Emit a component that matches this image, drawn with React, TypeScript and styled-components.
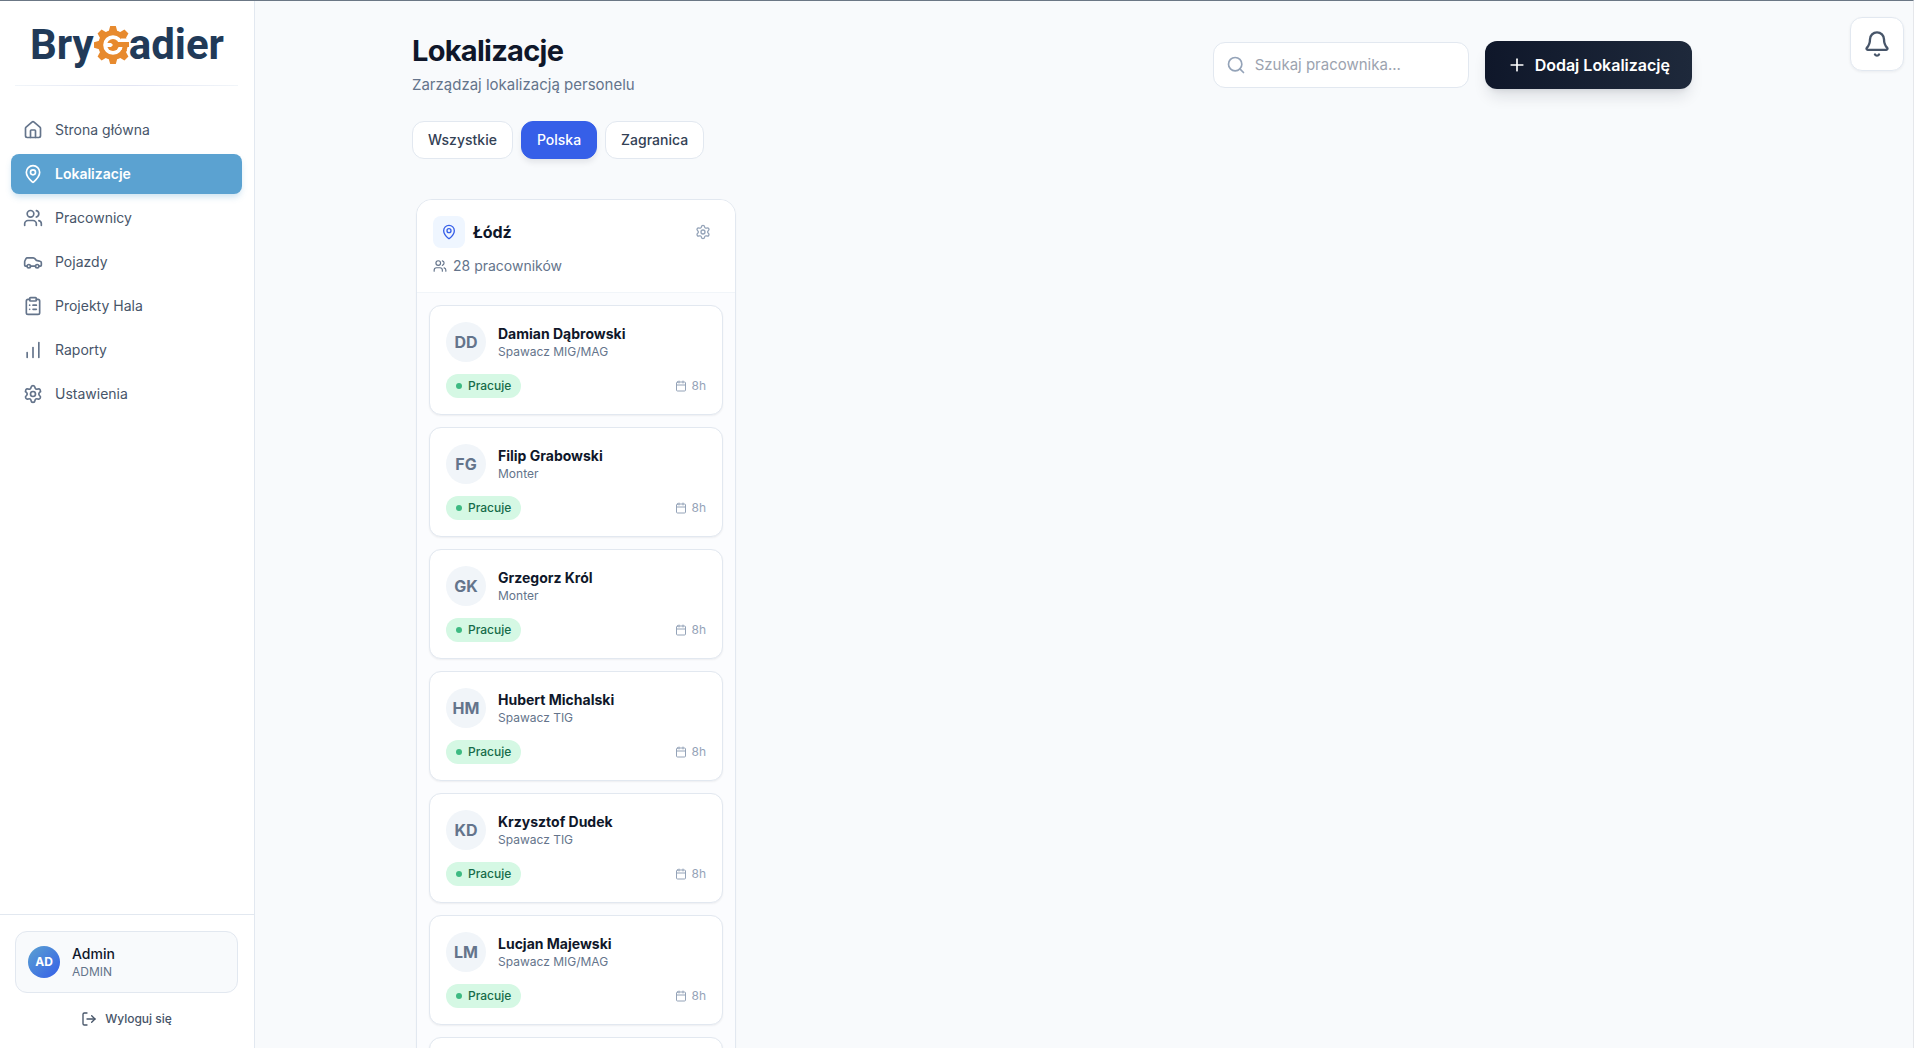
import React from "react";
import styled, { createGlobalStyle } from "styled-components";
import {
  Bell,
  Calendar,
  ChartNoAxesColumnIncreasing,
  ClipboardList,
  House,
  LogOut,
  MapPin,
  Plus,
  Search,
  Settings,
  Users,
} from "lucide-react";

const GlobalStyle = createGlobalStyle`
  *, *::before, *::after { box-sizing: border-box; }
  body {
    margin: 0;
    background: #f8fafc;
    color: #0f172a;
    font-family: Inter, "Noto Sans", sans-serif;
    font-size: 14px;
    line-height: 20px;
    -webkit-font-smoothing: antialiased;
  }
  button, input { font: inherit; color: inherit; }
  button { cursor: pointer; }
  h1, h2, h3, p, ul { margin: 0; padding: 0; }
  ul { list-style: none; }
`;

const Shell = styled.div`
  display: flex;
  height: 100vh;
  overflow: hidden;
  border-top: 1px solid #6b7785;
  border-right: 1px solid #e5e7eb;
`;

const Sidebar = styled.aside`
  flex: none;
  display: flex;
  flex-direction: column;
  width: 255px;
  background: #fff;
  border-right: 1px solid #e2e8f0;
`;

const Brand = styled.a`
  display: flex;
  align-items: center;
  justify-content: center;
  height: 84px;
  padding-top: 4px;
  color: #213a58;
  font-family: Roboto, sans-serif;
  font-size: 42px;
  font-weight: 700;
  line-height: 48px;
  text-decoration: none;
`;

const GearMark = styled.svg`
  flex: none;
  width: 35px;
  height: 38px;
`;

const Divider = styled.div`
  height: 1px;
  margin: 0 16px 0 15px;
  background: linear-gradient(90deg, #f1f5f9, #e2e4f3, #f1f5f9);
`;

const Nav = styled.nav`
  flex: 1;
  padding: 24px 12px 0 11px;
`;

const NavList = styled.ul`
  display: flex;
  flex-direction: column;
  gap: 4px;
`;

const NavLink = styled.a<{ $active?: boolean }>`
  display: flex;
  align-items: center;
  gap: 12px;
  height: 40px;
  padding: 0 12px;
  border-radius: 8px;
  font-weight: ${(p) => (p.$active ? 600 : 400)};
  text-decoration: none;
  color: ${(p) => (p.$active ? "#fff" : "#475569")};
  background: ${(p) => (p.$active ? "#5ba2d1" : "transparent")};
  box-shadow: ${(p) => (p.$active ? "0 4px 6px -1px rgba(91, 162, 209, 0.3)" : "none")};
  svg { color: ${(p) => (p.$active ? "#fff" : "#64748b")}; }
`;

const SidebarFooter = styled.div`
  display: flex;
  flex-direction: column;
  gap: 8px;
  padding: 16px 16px 11px 15px;
  border-top: 1px solid #e2e8f0;
`;

const Account = styled.div`
  display: flex;
  align-items: center;
  gap: 12px;
  height: 62px;
  padding: 0 12px;
  border: 1px solid #e2e8f0;
  border-radius: 12px;
  background: #f8fafc;
`;

const AccountAvatar = styled.span`
  display: grid;
  place-items: center;
  width: 32px;
  height: 32px;
  border-radius: 50%;
  background: linear-gradient(135deg, #5ba2d1, #345ee8);
  color: #fff;
  font-size: 12px;
  font-weight: 700;
`;

const AccountName = styled.p`
  color: #0f172a;
  font-weight: 500;
  line-height: 20px;
`;

const Caption = styled.p`
  color: #64748b;
  font-size: 12px;
  line-height: 16px;
`;

const LogoutButton = styled.button`
  display: flex;
  align-items: center;
  justify-content: center;
  gap: 8px;
  height: 36px;
  border: 0;
  background: transparent;
  color: #475569;
  font-size: 12px;
  font-weight: 500;
`;

const Main = styled.main`
  flex: 1;
  min-width: 0;
  padding: 32px 96px 0 32px;
`;

const Content = styled.div`
  max-width: 1280px;
  margin: 0 auto;
`;

const Header = styled.header`
  display: flex;
  align-items: center;
  justify-content: space-between;
  gap: 24px;
`;

const Title = styled.h1`
  font-size: 29px;
  font-weight: 700;
  line-height: 36px;
  letter-spacing: -0.025em;
`;

const Subtitle = styled.p`
  margin-top: 4px;
  color: #64748b;
  font-size: 15px;
  line-height: 24px;
`;

const Actions = styled.div`
  display: flex;
  align-items: center;
  gap: 16px;
`;

const SearchBox = styled.label`
  display: flex;
  align-items: center;
  gap: 9px;
  width: 256px;
  height: 46px;
  padding: 0 12px;
  border: 1px solid #e2e8f0;
  border-radius: 12px;
  background: #fff;
  color: #94a3b8;
  svg { flex: none; }
`;

const SearchInput = styled.input`
  flex: 1;
  min-width: 0;
  padding: 0;
  border: 0;
  outline: 0;
  background: transparent;
  color: #0f172a;
  font-size: 15px;
  line-height: 24px;
  &::placeholder { color: #9ca3af; opacity: 1; }
`;

const AddButton = styled.button`
  display: flex;
  align-items: center;
  gap: 8px;
  height: 48px;
  padding: 0 22px;
  border: 0;
  border-radius: 12px;
  background: linear-gradient(90deg, #0f172a, #1e293b);
  box-shadow: 0 10px 15px -3px rgba(15, 23, 42, 0.12), 0 4px 6px -4px rgba(15, 23, 42, 0.12);
  color: #fff;
  font-size: 16px;
  font-weight: 600;
`;

const Filters = styled.div`
  display: flex;
  gap: 8px;
  margin-top: 24px;
`;

const FilterButton = styled.button<{ $active?: boolean }>`
  height: 38px;
  padding: 0 15px;
  border: 1px solid ${(p) => (p.$active ? "#365fe8" : "#e2e8f0")};
  border-radius: 12px;
  background: ${(p) => (p.$active ? "#365fe8" : "#fff")};
  box-shadow: ${(p) => (p.$active ? "0 4px 6px -1px rgba(15, 23, 42, 0.1)" : "none")};
  color: ${(p) => (p.$active ? "#fff" : "#334155")};
  font-weight: 500;
`;

const Board = styled.div`
  display: flex;
  align-items: flex-start;
  gap: 24px;
  margin-top: 40px;
  padding: 0 4px;
`;

const Column = styled.section`
  width: 320px;
  border: 1px solid #e2e8f0;
  border-radius: 16px;
  background: #fbfcfe;
  box-shadow: 0 1px 2px rgba(15, 23, 42, 0.04);
  overflow: hidden;
`;

const ColumnHeader = styled.div`
  display: flex;
  flex-direction: column;
  gap: 8px;
  padding: 16px;
  border-bottom: 1px solid #f1f5f9;
  background: #fff;
`;

const ColumnTitleRow = styled.div`
  display: flex;
  align-items: center;
  gap: 8px;
`;

const PinTile = styled.span`
  display: grid;
  place-items: center;
  width: 32px;
  height: 32px;
  border-radius: 8px;
  background: #eff6ff;
  color: #365fe8;
`;

const ColumnTitle = styled.h2`
  flex: 1;
  font-size: 16px;
  font-weight: 700;
  line-height: 24px;
`;

const IconButton = styled.button`
  display: grid;
  place-items: center;
  width: 32px;
  height: 32px;
  padding: 0;
  border: 0;
  border-radius: 8px;
  background: transparent;
  color: #94a3b8;
`;

const Headcount = styled.p`
  display: flex;
  align-items: center;
  gap: 6px;
  color: #64748b;
`;

const WorkerList = styled.ul`
  display: flex;
  flex-direction: column;
  gap: 12px;
  padding: 12px;
`;

const WorkerCard = styled.li`
  display: flex;
  flex-direction: column;
  gap: 12px;
  padding: 16px;
  border: 1px solid #e2e8f0;
  border-radius: 12px;
  background: #fff;
  box-shadow: 0 1px 2px rgba(15, 23, 42, 0.06);
`;

const Person = styled.div`
  display: flex;
  align-items: center;
  gap: 12px;
`;

const WorkerAvatar = styled.span`
  display: grid;
  place-items: center;
  width: 40px;
  height: 40px;
  border-radius: 50%;
  background: #f1f5f9;
  color: #64748b;
  font-size: 16px;
  font-weight: 700;
`;

const WorkerName = styled.h3`
  font-size: 14px;
  font-weight: 700;
  line-height: 20px;
`;

const StatusRow = styled.div`
  display: flex;
  align-items: center;
  justify-content: space-between;
`;

const Badge = styled.span`
  display: flex;
  align-items: center;
  gap: 6px;
  height: 24px;
  padding: 0 10px;
  border-radius: 12px;
  background: #d5f8e4;
  color: #166b49;
  font-size: 12px;
  font-weight: 500;
  &::before {
    content: "";
    width: 6px;
    height: 6px;
    border-radius: 50%;
    background: #3dba82;
  }
`;

const Hours = styled.span`
  display: flex;
  align-items: center;
  gap: 4px;
  color: #94a3b8;
  font-size: 12px;
`;

const NotificationButton = styled.button`
  position: fixed;
  top: 17px;
  right: 10px;
  display: grid;
  place-items: center;
  width: 54px;
  height: 54px;
  padding: 0;
  border: 1px solid #e2e8f0;
  border-radius: 12px;
  background: #fff;
  box-shadow: 0 1px 3px rgba(15, 23, 42, 0.06);
  color: #475569;
`;

const CarIcon = ({ size = 20 }: { size?: number }) => (
  <svg width={size} height={size} viewBox="0 0 24 24" fill="none" stroke="currentColor" strokeWidth="2" strokeLinecap="round" strokeLinejoin="round" aria-hidden="true">
    <path d="M19 17h2c.6 0 1-.4 1-1v-3c0-.9-.7-1.7-1.5-1.9C18.7 10.600 16 10 16 10s-1.300-1.400-2.200-2.300c-.5-.4-1.100-.7-1.800-.7H5c-.6 0-1.100.4-1.400.9l-1.400 2.900A3.700 3.700 0 0 0 2 12v4c0 .6.4 1 1 1h2" />
    <circle cx="7" cy="17" r="2" />
    <path d="M9 17h6" />
    <circle cx="17" cy="17" r="2" />
  </svg>
);

const toothAngles = [0, 45, 90, 135, 180, 225, 270, 315];

const BrandGear = () => (
  <GearMark viewBox="0 0 35 38" aria-hidden="true">
    <g fill="#e78a2e">
      {toothAngles.map((angle) => (
        <path key={angle} d="M14.500 6 16.200 0h5.600L23.500 6z" transform={`rotate(${angle} 19 19)`} />
      ))}
    </g>
    <circle cx="19" cy="19" r="12.300" fill="#fff" stroke="#e78a2e" strokeWidth="5" />
    <path d="M27 12.500H38V24H27z" fill="#fff" />
    <path d="M21 16h14v5h-1.500l-1 4-5.500 1.500 1.500-5.500H21z" fill="#e78a2e" />
    <circle cx="19" cy="19" r="6" fill="#e78a2e" />
    <path d="M11 17h6l2 2-2 2h-6z" fill="#fff" />
  </GearMark>
);

const navItems = [
  { label: "Strona główna", icon: House },
  { label: "Lokalizacje", icon: MapPin, active: true },
  { label: "Pracownicy", icon: Users },
  { label: "Pojazdy", icon: CarIcon },
  { label: "Projekty Hala", icon: ClipboardList },
  { label: "Raporty", icon: ChartNoAxesColumnIncreasing },
  { label: "Ustawienia", icon: Settings },
];

const filters = ["Wszystkie", "Polska", "Zagranica"];

const workers = [
  { initials: "DD", name: "Damian Dąbrowski", role: "Spawacz MIG/MAG" },
  { initials: "FG", name: "Filip Grabowski", role: "Monter" },
  { initials: "GK", name: "Grzegorz Król", role: "Monter" },
  { initials: "HM", name: "Hubert Michalski", role: "Spawacz TIG" },
  { initials: "KD", name: "Krzysztof Dudek", role: "Spawacz TIG" },
  { initials: "LM", name: "Lucjan Majewski", role: "Spawacz MIG/MAG" },
];

export default function App() {
  const [filter, setFilter] = React.useState("Polska");

  return (
    <Shell>
      <GlobalStyle />
      <Sidebar>
        <Brand href="#" aria-label="BryGadier">
          <span>Bry</span>
          <BrandGear />
          <span>adier</span>
        </Brand>
        <Divider />
        <Nav>
          <NavList>
            {navItems.map(({ label, icon: Icon, active }) => (
              <li key={label}>
                <NavLink href="#" $active={active} aria-current={active ? "page" : undefined}>
                  <Icon size={20} />
                  {label}
                </NavLink>
              </li>
            ))}
          </NavList>
        </Nav>
        <SidebarFooter>
          <Account>
            <AccountAvatar>AD</AccountAvatar>
            <div>
              <AccountName>Admin</AccountName>
              <Caption>ADMIN</Caption>
            </div>
          </Account>
          <LogoutButton type="button">
            <LogOut size={16} />
            Wyloguj się
          </LogoutButton>
        </SidebarFooter>
      </Sidebar>

      <Main>
        <Content>
          <Header>
            <div>
              <Title>Lokalizacje</Title>
              <Subtitle>Zarządzaj lokalizacją personelu</Subtitle>
            </div>
            <Actions>
              <SearchBox>
                <Search size={20} />
                <SearchInput type="text" placeholder="Szukaj pracownika..." aria-label="Szukaj pracownika" />
              </SearchBox>
              <AddButton type="button">
                <Plus size={20} />
                Dodaj Lokalizację
              </AddButton>
            </Actions>
          </Header>

          <Filters>
            {filters.map((name) => (
              <FilterButton key={name} type="button" $active={name === filter} onClick={() => setFilter(name)}>
                {name}
              </FilterButton>
            ))}
          </Filters>

          <Board>
            <Column>
              <ColumnHeader>
                <ColumnTitleRow>
                  <PinTile>
                    <MapPin size={16} />
                  </PinTile>
                  <ColumnTitle>Łódź</ColumnTitle>
                  <IconButton type="button" aria-label="Ustawienia lokalizacji">
                    <Settings size={16} />
                  </IconButton>
                </ColumnTitleRow>
                <Headcount>
                  <Users size={14} />
                  28 pracowników
                </Headcount>
              </ColumnHeader>
              <WorkerList>
                {workers.map((worker) => (
                  <WorkerCard key={worker.name}>
                    <Person>
                      <WorkerAvatar>{worker.initials}</WorkerAvatar>
                      <div>
                        <WorkerName>{worker.name}</WorkerName>
                        <Caption>{worker.role}</Caption>
                      </div>
                    </Person>
                    <StatusRow>
                      <Badge>Pracuje</Badge>
                      <Hours>
                        <Calendar size={12} />
                        8h
                      </Hours>
                    </StatusRow>
                  </WorkerCard>
                ))}
                <WorkerCard aria-hidden="true">
                  <Person>
                    <WorkerAvatar />
                  </Person>
                </WorkerCard>
              </WorkerList>
            </Column>
          </Board>
        </Content>
      </Main>

      <NotificationButton type="button" aria-label="Powiadomienia">
        <Bell size={28} />
      </NotificationButton>
    </Shell>
  );
}
